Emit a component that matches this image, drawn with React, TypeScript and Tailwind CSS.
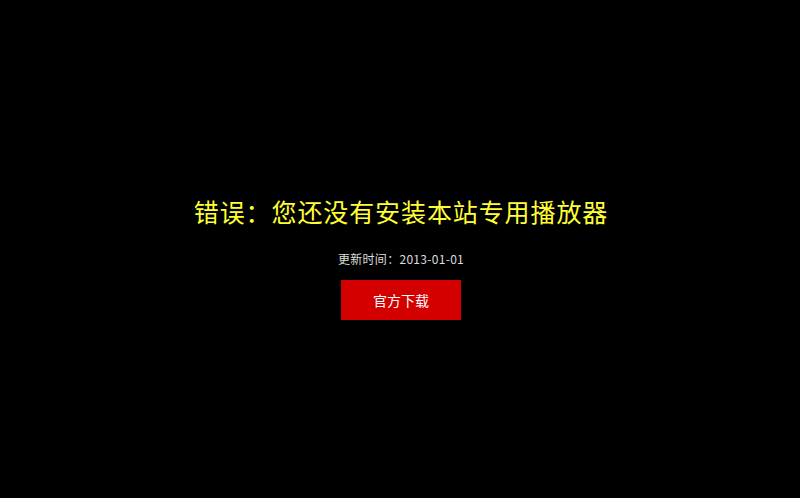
import React from 'react';

const App: React.FC = () => {
    return (
        <div
            className="w-full h-[498px] bg-black flex flex-col items-center pt-[195px]"
            style={{ fontFamily: '"Microsoft YaHei", "Noto Sans CJK SC", sans-serif' }}
        >
            <h1 className="text-[25px] leading-[32px] text-[#ffff33] font-normal tracking-[0.9px] pl-[2px]">
                错误：您还没有安装本站专用播放器
            </h1>
            <p className="mt-[24px] text-[12px] leading-[16px] text-[#dddddd] tracking-[0.3px] pl-[2px]">
                更新时间：2013-01-01
            </p>
            <a
                href="#"
                className="mt-[13px] ml-[2px] w-[120px] h-[40px] bg-[#d40000] text-white text-[14px] flex items-center justify-center"
            >
                官方下载
            </a>
        </div>
    );
};

export default App;
